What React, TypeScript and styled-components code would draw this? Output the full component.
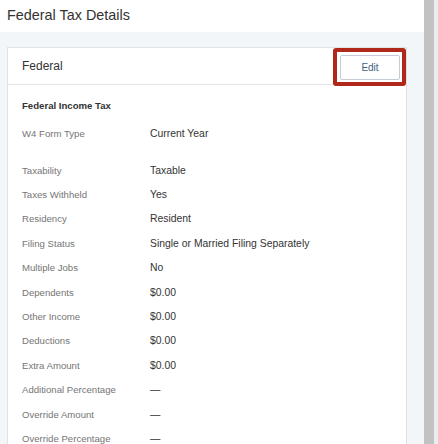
import React from "react";
import styled, { createGlobalStyle } from "styled-components";

const Global = createGlobalStyle`
  html, body { margin: 0; padding: 0; height: 100%; overflow: hidden; }
  body { font-family: "Liberation Sans", Arial, sans-serif; background: #ffffff; }
  #root { height: 100%; }
`;

const Page = styled.div`
  display: flex;
  height: 444px;
  width: 438px;
  overflow: hidden;
`;

const Main = styled.div`
  flex: 1;
  display: flex;
  flex-direction: column;
  min-width: 0;
  min-height: 0;
`;

const Scrollbar = styled.div`
  width: 14px;
  flex-shrink: 0;
  display: flex;
  background: #ececec;
`;

const Thumb = styled.div`
  width: 10px;
  background: #c2c2c2;
`;

const TopBar = styled.header`
  height: 32px;
  flex-shrink: 0;
  display: flex;
  align-items: center;
  padding-left: 7px;
  background: #ffffff;
  box-sizing: border-box;
`;

const Title = styled.h1`
  margin: 0;
  font-size: 14.4px;
  font-weight: 400;
  color: #333333;
  padding-bottom: 3px;
`;

const Content = styled.div`
  flex: 1;
  min-height: 0;
  overflow: hidden;
  background: #f3f6f9;
  padding: 15px 17px 0 7px;
`;

const Card = styled.section`
  background: #ffffff;
  border: 1px solid #dfe3e8;
  border-bottom: none;
  min-height: 100%;
  box-sizing: border-box;
`;

const CardHeader = styled.div`
  height: 37px;
  display: flex;
  align-items: center;
  justify-content: space-between;
  padding: 0 0 0 14px;
  border-bottom: 1px solid #e3e6ea;
  box-sizing: border-box;
`;

const CardTitle = styled.span`
  font-size: 12px;
  color: #333333;
`;

const Highlight = styled.div`
  height: 38px;
  margin: -1px 0 -2px 0;
  box-sizing: border-box;
  border: 4px solid #b0281a;
  border-radius: 3px;
  padding: 3px 2px 2px 3px;
  display: flex;
`;

const EditButton = styled.button`
  width: 60px;
  height: 25px;
  background: #ffffff;
  border: 1px solid #c6ccd4;
  border-radius: 2px;
  font-family: "Liberation Sans", Arial, sans-serif;
  font-size: 10px;
  color: #44607f;
  padding: 0;
  cursor: pointer;
`;

const CardBody = styled.div`
  padding: 14px 0 0 14px;
`;

const SectionTitle = styled.div`
  font-size: 9.6px;
  font-weight: 700;
  line-height: 14px;
  color: #333333;
  margin-bottom: 8px;
`;

const Row = styled.div<{ $gapAfter?: boolean }>`
  display: flex;
  align-items: center;
  height: 24.4px;
  margin-bottom: ${(p) => (p.$gapAfter ? "12.6px" : "0")};
`;

const Label = styled.span`
  width: 128px;
  font-size: 9.6px;
  color: #757575;
`;

const Value = styled.span`
  font-size: 10.4px;
  color: #333333;
`;

const rows: { label: string; value: string; gap?: boolean }[] = [
  { label: "W4 Form Type", value: "Current Year", gap: true },
  { label: "Taxability", value: "Taxable" },
  { label: "Taxes Withheld", value: "Yes" },
  { label: "Residency", value: "Resident" },
  { label: "Filing Status", value: "Single or Married Filing Separately" },
  { label: "Multiple Jobs", value: "No" },
  { label: "Dependents", value: "$0.00" },
  { label: "Other Income", value: "$0.00" },
  { label: "Deductions", value: "$0.00" },
  { label: "Extra Amount", value: "$0.00" },
  { label: "Additional Percentage", value: "—" },
  { label: "Override Amount", value: "—" },
  { label: "Override Percentage", value: "—" },
];

export default function App() {
  return (
    <>
      <Global />
      <Page>
        <Main>
          <TopBar>
            <Title>Federal Tax Details</Title>
          </TopBar>
          <Content>
            <Card>
              <CardHeader>
                <CardTitle>Federal</CardTitle>
                <Highlight>
                  <EditButton>Edit</EditButton>
                </Highlight>
              </CardHeader>
              <CardBody>
                <SectionTitle>Federal Income Tax</SectionTitle>
                {rows.map((r) => (
                  <Row key={r.label} $gapAfter={r.gap}>
                    <Label>{r.label}</Label>
                    <Value>{r.value}</Value>
                  </Row>
                ))}
              </CardBody>
            </Card>
          </Content>
        </Main>
        <Scrollbar>
          <Thumb />
        </Scrollbar>
      </Page>
    </>
  );
}
